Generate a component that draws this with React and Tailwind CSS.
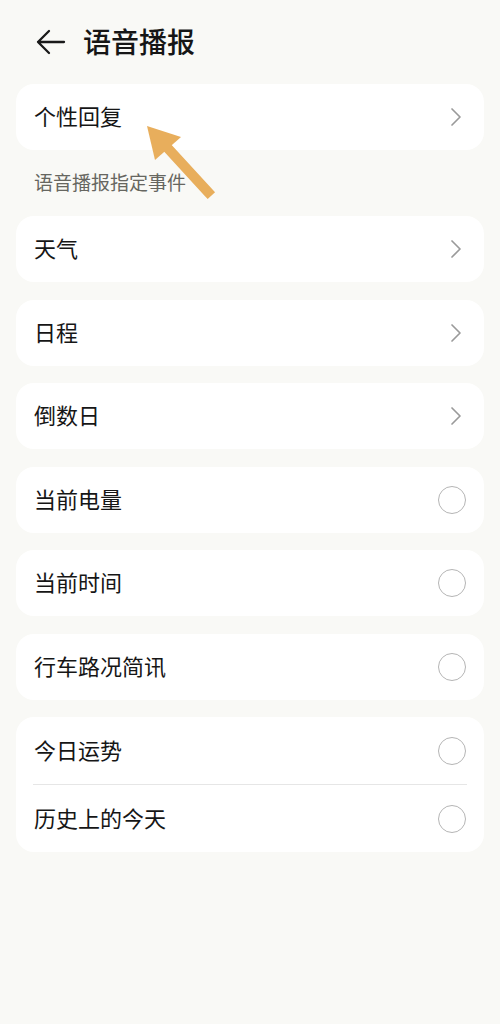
import React from "react";

const font = { fontFamily: '"Noto Sans CJK SC", "Noto Sans", sans-serif' };

function Chevron() {
  return (
    <svg width="14" height="20" viewBox="0 0 14 20" fill="none" className="mr-[3px]">
      <polyline points="3,2 11,10 3,18" stroke="#9a9a9a" strokeWidth="1.7" strokeLinecap="round" strokeLinejoin="round" />
    </svg>
  );
}

function Radio() {
  return <div className="w-[28px] h-[28px] rounded-full border-[1.5px] border-[#b5b5b5]" />;
}

function Row({ label, right }) {
  return (
    <div className="h-[67px] flex items-center justify-between px-[18px]">
      <span className="text-[22px] text-[#161616] leading-none pb-[4px]">{label}</span>
      {right === "chev" ? <Chevron /> : <Radio />}
    </div>
  );
}

function Card({ label, right }) {
  return (
    <div className="bg-white rounded-[18px] h-[66px] flex items-center justify-between px-[18px]">
      <span className="text-[22px] text-[#161616] leading-none pb-[4px]">{label}</span>
      {right === "chev" ? <Chevron /> : <Radio />}
    </div>
  );
}

export default function App() {
  return (
    <div className="relative w-[500px] h-[1024px] bg-[#f9f9f6] overflow-hidden" style={font}>
      <div className="h-[84px] flex items-center pl-[36px]">
        <svg width="30" height="26" viewBox="0 0 30 26" fill="none">
          <path d="M13 2 L2 13 L13 24 M2 13 H28" stroke="#1a1a1a" strokeWidth="2.3" strokeLinecap="round" strokeLinejoin="round" />
        </svg>
        <span className="ml-[17px] text-[28px] font-medium text-[#161616] leading-none pb-[2px]">语音播报</span>
      </div>
      <div className="px-4 flex flex-col gap-[17.5px]">
        <Card label="个性回复" right="chev" />
        <div className="h-[31px] flex items-center px-[18px]">
          <span className="text-[19px] text-[#666660] leading-none pb-[3px]">语音播报指定事件</span>
        </div>
        <Card label="天气" right="chev" />
        <Card label="日程" right="chev" />
        <Card label="倒数日" right="chev" />
        <Card label="当前电量" right="radio" />
        <Card label="当前时间" right="radio" />
        <Card label="行车路况简讯" right="radio" />
        <div className="bg-white rounded-[18px] flex flex-col">
          <Row label="今日运势" right="radio" />
          <div className="mx-[17px] h-px bg-[#e6e6e6]" />
          <Row label="历史上的今天" right="radio" />
        </div>
      </div>
      <svg className="absolute left-0 top-0 pointer-events-none" width="500" height="260" viewBox="0 0 500 260">
        <line x1="208" y1="192" x2="164" y2="144" stroke="#e8ae5c" strokeWidth="10" strokeLinecap="square" />
        <polygon points="147,126 155,160 181,137" fill="#e8ae5c" />
      </svg>
    </div>
  );
}
